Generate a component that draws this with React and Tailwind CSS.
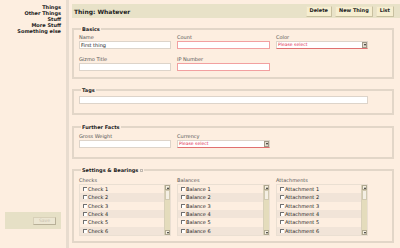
import React from "react";

const nav = ["Things", "Other Things", "Stuff", "More Stuff", "Something else"];

const lists = [
  { title: "Checks", item: "Check" },
  { title: "Balances", item: "Balance" },
  { title: "Attachments", item: "Attachment" },
];

const Label = ({ children }) => (
  <div className="text-[5px] leading-[6px] text-[#555] mb-[1px]">{children}</div>
);

const Input = ({ required = false, wide = false }) => (
  <div
    className={`h-[8px] bg-white border ${
      required ? "border-[#f2a0a0]" : "border-[#ddd4ca]"
    } ${wide ? "w-[289px]" : "w-full"}`}
  ></div>
);

const Select = () => (
  <div className="h-[8px] bg-white border border-[#ddd4ca] border-b-[#e07070] flex items-center justify-between">
    <span className="text-[4.5px] leading-[6px] text-[#e03050] pl-[1px]">Please select</span>
    <span className="w-[5px] h-[6px] bg-[#e4ddd0] border border-[#a09888] flex items-center justify-center">
      <span className="w-0 h-0 border-l-[1.5px] border-r-[1.5px] border-t-[2px] border-l-transparent border-r-transparent border-t-[#222]"></span>
    </span>
  </div>
);

const Fieldset = ({ legend, children, extra, className = "" }) => (
  <fieldset className={`border-2 border-[#e2d6c8] px-[5px] mr-[6px] ${className}`}>
    <legend className="text-[5px] leading-[6px] font-bold text-[#222] px-[1px] ml-[2px] flex items-center gap-[1px]">
      {legend}
      {extra}
    </legend>
    {children}
  </fieldset>
);

const Scrollbar = () => (
  <div className="w-[6px] bg-[#e4dcbc] flex flex-col justify-between border-l border-[#d8d0b8]">
    <div className="h-[5px] bg-[#f6f0e0] border border-[#b0a890] flex items-center justify-center">
      <span className="w-0 h-0 border-l-[1.5px] border-r-[1.5px] border-b-[2px] border-l-transparent border-r-transparent border-b-[#222]"></span>
    </div>
    <div className="flex-1 flex flex-col">
      <div className="h-[10px] bg-[#f4efe4] border border-[#d0c8b0]"></div>
    </div>
    <div className="h-[5px] bg-[#f6f0e0] border border-[#b0a890] flex items-center justify-center">
      <span className="w-0 h-0 border-l-[1.5px] border-r-[1.5px] border-t-[2px] border-l-transparent border-r-transparent border-t-[#222]"></span>
    </div>
  </div>
);

const CheckList = ({ title, item }) => (
  <div>
    <Label>{title}</Label>
    <div className="flex border border-[#eadfd2] h-[52px]">
      <div className="flex-1 flex flex-col">
        {[1, 2, 3, 4, 5, 6].map((n) => (
          <div
            key={n}
            className={`flex-1 flex items-center pl-[3px] gap-[1px] ${
              n % 2 === 0 ? "bg-[#f1e4d8]" : "bg-[#fdeee0]"
            }`}
          >
            <span className="w-[4px] h-[4px] bg-white border-t border-l border-[#707070] border-b-[#e8e8e8] border-r-[#e8e8e8]"></span>
            <span className="text-[5px] leading-[6px] text-[#222]">
              {item} {n}
            </span>
          </div>
        ))}
      </div>
      <Scrollbar />
    </div>
  </div>
);

export default function App() {
  return (
    <div
      className="w-[400px] h-[248px] bg-[#fdeee0] flex overflow-hidden text-[#222]"
      style={{ fontFamily: '"DejaVu Sans", Verdana, sans-serif' }}
    >
      <aside className="w-[66px] flex flex-col pr-[5px]">
        <nav className="pt-[4px] flex flex-col items-end">
          {nav.map((n) => (
            <a key={n} className="text-[5px] leading-[6px] font-bold text-[#222]">
              {n}
            </a>
          ))}
        </nav>
        <div className="mt-auto mb-[19px] ml-[5px] h-[17px] bg-[#e6e0c6] flex items-center justify-end pr-[5px]">
          <button className="h-[8px] px-[5px] text-[4.5px] leading-[6px] bg-[#ece6d2] border border-[#d8d0b8] border-b-[#b8b098] border-r-[#b8b098] text-[#c8c0b0]">
            Save
          </button>
        </div>
      </aside>
      <div className="w-[3px] bg-[#e8dccf]"></div>
      <main className="flex-1 pl-[3px] flex flex-col">
        <header className="mt-[4px] h-[14px] bg-[#e8e2c8] flex items-center justify-between pl-[2px] pr-[6px]">
          <h1 className="text-[6px] font-bold text-[#222]">Thing: Whatever</h1>
          <div className="flex gap-[3px]">
            {["Delete", "New Thing", "List"].map((b) => (
              <button
                key={b}
                className="h-[11px] px-[3px] text-[5px] font-bold text-[#222] bg-[#f6eed0] border border-[#ece4c8] border-b-[#c8c0a0] border-r-[#c8c0a0]"
              >
                {b}
              </button>
            ))}
          </div>
        </header>

        <div className="flex flex-col">
          <Fieldset legend="Basics" className="mt-[8px] pb-[6px]">
            <div className="grid grid-cols-[92px_93px_92px] gap-x-[6px] gap-y-[7px] pt-[2px]">
              <div>
                <Label>Name</Label>
                <div className="h-[8px] bg-white border border-[#ddd4ca] text-[5px] leading-[6px] pl-[1px]">First thing</div>
              </div>
              <div>
                <Label>Count</Label>
                <Input required />
              </div>
              <div>
                <Label>Color</Label>
                <Select />
              </div>
              <div>
                <Label>Gizmo Title</Label>
                <Input />
              </div>
              <div>
                <Label>IP Number</Label>
                <Input required />
              </div>
            </div>
          </Fieldset>

          <Fieldset legend="Tags" className="mt-[8px] pb-[9px]">
            <div className="pt-[3px]">
              <Input wide />
            </div>
          </Fieldset>

          <Fieldset legend="Further Facts" className="mt-[9px] pb-[9px]">
            <div className="grid grid-cols-[92px_93px] gap-x-[6px] pt-[3px]">
              <div>
                <Label>Gross Weight</Label>
                <Input />
              </div>
              <div>
                <Label>Currency</Label>
                <Select />
              </div>
            </div>
          </Fieldset>

          <Fieldset
            legend="Settings & Bearings"
            className="mt-[8px] pb-[5px]"
            extra={<span className="w-[3px] h-[3px] border border-[#c0b8b0] ml-[1px]"></span>}
          >
            <div className="grid grid-cols-[92px_93px_92px] gap-x-[6px] pt-[4px]">
              {lists.map((l) => (
                <CheckList key={l.title} {...l} />
              ))}
            </div>
          </Fieldset>
        </div>
      </main>
    </div>
  );
}
